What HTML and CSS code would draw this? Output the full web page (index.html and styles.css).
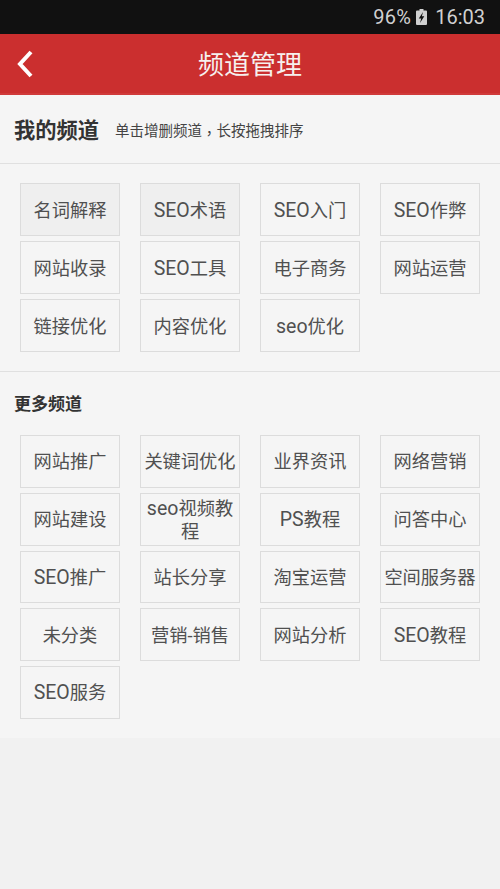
FILE: index.html
```html
<!DOCTYPE html>
<html lang="zh-CN">
<head>
<meta charset="utf-8">
<title>频道管理</title>
<link rel="stylesheet" href="styles.css">
</head>
<body>
<div class="status">
  <span class="status-pct">96%</span>
  <svg class="battery" width="11" height="16" viewBox="0 0 11 16"><path d="M3.500 0h4v1.500h2.500a1 1 0 0 1 1 1V15a1 1 0 0 1-1 1H1a1 1 0 0 1-1-1V2.500a1 1 0 0 1 1-1h2.500z" fill="#d0d0d0"/><path d="M7 3 2.800 9.500h2.400L4 14l4.300-6.800H5.900z" fill="#111"/></svg>
  <span class="status-time">16:03</span>
</div>
<header class="bar">
  <svg class="back" width="20" height="30" viewBox="0 0 20 30"><path d="M16 3 5 15l11 12" fill="none" stroke="#fff" stroke-width="4"/></svg>
  <h1>频道管理</h1>
</header>
<main class="panel">
  <div class="mine-head">
    <h2>我的频道</h2>
    <span class="hint">单击增删频道<span class="comma" lang="zh-TW">，</span>长按拖拽排序</span>
  </div>
  <div class="grid mine">
    <a class="chip active">名词解释</a>
    <a class="chip active"><span class="lat">SEO</span>术语</a>
    <a class="chip"><span class="lat">SEO</span>入门</a>
    <a class="chip"><span class="lat">SEO</span>作弊</a>
    <a class="chip">网站收录</a>
    <a class="chip"><span class="lat">SEO</span>工具</a>
    <a class="chip">电子商务</a>
    <a class="chip">网站运营</a>
    <a class="chip">链接优化</a>
    <a class="chip">内容优化</a>
    <a class="chip"><span class="lat">seo</span>优化</a>
  </div>
  <h3>更多频道</h3>
  <div class="grid more">
    <a class="chip">网站推广</a>
    <a class="chip">关键词优化</a>
    <a class="chip">业界资讯</a>
    <a class="chip">网络营销</a>
    <a class="chip">网站建设</a>
    <a class="chip"><span><span class="lat">seo</span>视频教程</span></a>
    <a class="chip"><span class="lat">PS</span>教程</a>
    <a class="chip">问答中心</a>
    <a class="chip"><span class="lat">SEO</span>推广</a>
    <a class="chip">站长分享</a>
    <a class="chip">淘宝运营</a>
    <a class="chip">空间服务器</a>
    <a class="chip">未分类</a>
    <a class="chip">营销-销售</a>
    <a class="chip">网站分析</a>
    <a class="chip"><span class="lat">SEO</span>教程</a>
    <a class="chip"><span class="lat">SEO</span>服务</a>
  </div>
</main>
</body>
</html>
```
FILE: styles.css
```css
* { box-sizing: border-box; }
html, body { margin: 0; height: 100%; }
body {
  width: 500px;
  height: 889px;
  overflow: hidden;
  background: #f1f1f1;
  font-family: Roboto, "Noto Sans CJK SC", sans-serif;
  color: #444;
}
.status {
  height: 34px;
  background: #111;
  color: #d0d0d0;
  display: flex;
  align-items: center;
  justify-content: flex-end;
  padding-right: 15px;
  font-size: 20px;
  line-height: 34px;
}
.status-pct { letter-spacing: 0.3px; }
.battery { margin: 0 8px 0 5px; }
.bar {
  height: 61px;
  background: #cb2f2f;
  border-bottom: 2px solid #d03a3a;
  position: relative;
  display: flex;
  align-items: center;
  justify-content: center;
}
.bar h1 {
  margin: 0;
  padding-top: 3px;
  color: #f6f0ee;
  font-size: 26px;
  font-weight: 400;
  line-height: 59px;
}
.back { position: absolute; left: 15px; top: 15px; }
.panel {
  background: #f5f5f5;
  height: 643px;
  padding-bottom: 20px;
}
.mine-head {
  height: 69px;
  border-bottom: 1px solid #e0e0e0;
  display: flex;
  align-items: center;
  padding: 0 14px 2px;
}
.mine-head h2 {
  margin: 0;
  font-size: 21.25px;
  font-weight: 700;
  color: #333;
}
.hint {
  margin-left: 16px;
  padding-top: 2px;
  font-size: 14.5px;
  color: #444;
}
.comma {
  display: inline-block;
  font-family: "Noto Sans CJK TC", sans-serif;
  transform: translateY(3px);
}
.grid {
  display: grid;
  grid-template-columns: repeat(4, 100px);
  grid-auto-rows: 53px;
  column-gap: 20px;
  row-gap: 5px;
  padding: 0 20px;
}
.mine {
  padding-top: 19px;
  padding-bottom: 19px;
  border-bottom: 1px solid #e0e0e0;
}
.more { grid-auto-rows: 52.75px; }
.panel h3 {
  margin: 0;
  height: 63px;
  padding: 20px 14px 0;
  font-size: 17px;
  line-height: 24px;
  font-weight: 700;
  color: #333;
}
.chip {
  border: 1px solid #dcdcdc;
  display: flex;
  align-items: center;
  justify-content: center;
  text-align: center;
  font-size: 18.25px;
  line-height: 23px;
  color: #505050;
  padding: 1px 2px 0;
}
.chip.active { background: #efefef; }
.lat { font-size: 19.5px; }
```
